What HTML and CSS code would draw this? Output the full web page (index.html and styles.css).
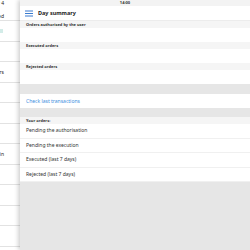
FILE: index.html
```html
<!DOCTYPE html>
<html lang="en">
<head>
    <meta charset="UTF-8">
    <meta name="viewport" content="width=device-width, initial-scale=1.0">
    <title>Day summary</title>
    <link rel="stylesheet" href="styles.css">
</head>
<body>
    <div class="screen">
        <!-- page behind the drawer -->
        <div class="back">
            <div class="back-head">
                <span class="back-date">Tuesday 4</span>
                <span class="back-title">Overview - Authorised</span>
            </div>
            <div class="back-row start"><span class="back-mark"></span></div>
            <div class="back-row"></div>
            <div class="back-row"><span>Payments and transfers</span></div>
            <div class="back-row"></div>
            <div class="back-row"></div>
            <div class="back-row"></div>
            <div class="back-row"><span>Beneficiaries and templates in</span></div>
            <div class="back-row"></div>
            <div class="back-row"></div>
            <div class="back-row"></div>
            <div class="back-row"></div>
        </div>

        <div class="status">14:00</div>

        <aside class="drawer">
            <div class="drawer-status"></div>
            <div class="drawer-title">
                <svg class="menu-icon" width="8" height="7" viewBox="0 0 8 7">
                    <rect x="0" y="0.5" width="8" height="1" fill="#3a7bcf"/>
                    <rect x="0" y="3" width="8" height="1" fill="#3a7bcf"/>
                    <rect x="0" y="5.5" width="8" height="1" fill="#3a7bcf"/>
                </svg>
                <span>Day summary</span>
            </div>

            <div class="group-label">Orders authorised by the user</div>
            <div class="group-body"></div>
            <div class="group-label">Executed orders</div>
            <div class="group-body"></div>
            <div class="group-label">Rejected orders</div>
            <div class="group-body"></div>

            <div class="spacer"></div>
            <a class="link-row" href="#">Check last transactions</a>
            <div class="spacer"></div>

            <div class="group-label">Your orders:</div>
            <ul class="orders">
                <li>Pending the authorisation</li>
                <li>Pending the execution</li>
                <li>Executed (last 7 days)</li>
                <li>Rejected (last 7 days)</li>
            </ul>
        </aside>
    </div>
</body>
</html>
```

FILE: styles.css
```css
/* Global Styles */
body {
    margin: 0;
    padding: 0;
    font-family: "Noto Sans", "Open Sans", sans-serif;
    color: #222;
    background-color: #fff;
}
.screen {
    position: relative;
    width: 250px;
    height: 250px;
    overflow: hidden;
    background-color: #fff;
}

/* page behind the drawer */
.back {
    width: 20px;
}
.back-head {
    height: 20px;
    border-bottom: 1px solid #e2e2e2;
    display: flex;
    flex-direction: column;
    align-items: flex-end;
    overflow: hidden;
    font-size: 5px;
    white-space: nowrap;
}
.back-date {
    padding-right: 16px;
    line-height: 6px;
}
.back-title {
    padding-right: 16px;
    margin-top: 7px;
}
.back-row {
    height: 19.5px;
    border-bottom: 1px solid #e2e2e2;
    display: flex;
    align-items: center;
    justify-content: flex-end;
    overflow: hidden;
    font-size: 5px;
    white-space: nowrap;
}
.back-row.start {
    justify-content: flex-start;
}
.back-row span {
    padding-right: 16px;
}
.back-row .back-mark {
    width: 3px;
    height: 4px;
    padding: 0;
    background-color: #d3ece8;
}

/* status bar */
.status {
    position: absolute;
    top: 0;
    left: 0;
    right: 0;
    z-index: 2;
    text-align: center;
    font-size: 4px;
    line-height: 6px;
    font-weight: bold;
    color: #333;
}

/* drawer */
.drawer {
    position: absolute;
    top: 0;
    left: 20px;
    right: 0;
    bottom: 0;
    background-color: #e6e6e6;
    box-shadow: -2px 0 4px rgba(0, 0, 0, 0.18);
    display: flex;
    flex-direction: column;
}
.drawer-status {
    height: 6px;
    background-color: #f3f3f3;
}
.drawer-title {
    height: 14px;
    background-color: #fff;
    border-bottom: 1px solid #ececec;
    display: flex;
    align-items: center;
    gap: 5px;
    padding-left: 5px;
    font-size: 5.5px;
    font-weight: bold;
    color: #222;
}
.group-label {
    height: 7px;
    line-height: 7px;
    padding-left: 6px;
    background-color: #f5f5f5;
    font-size: 4px;
    font-weight: bold;
    color: #333;
}
.group-body {
    height: 14px;
    background-color: #fff;
}
.spacer {
    height: 9.5px;
}
.link-row {
    display: block;
    height: 14px;
    line-height: 14px;
    padding-left: 6px;
    background-color: #fff;
    font-size: 5px;
    color: #3d8ee0;
    text-decoration: none;
}
.orders {
    list-style: none;
    margin: 0;
    padding: 0;
}
.orders li {
    height: 13.5px;
    line-height: 13.5px;
    padding-left: 6px;
    background-color: #fff;
    border-bottom: 1px solid #f0f0f0;
    font-size: 5px;
    color: #333;
}
```
